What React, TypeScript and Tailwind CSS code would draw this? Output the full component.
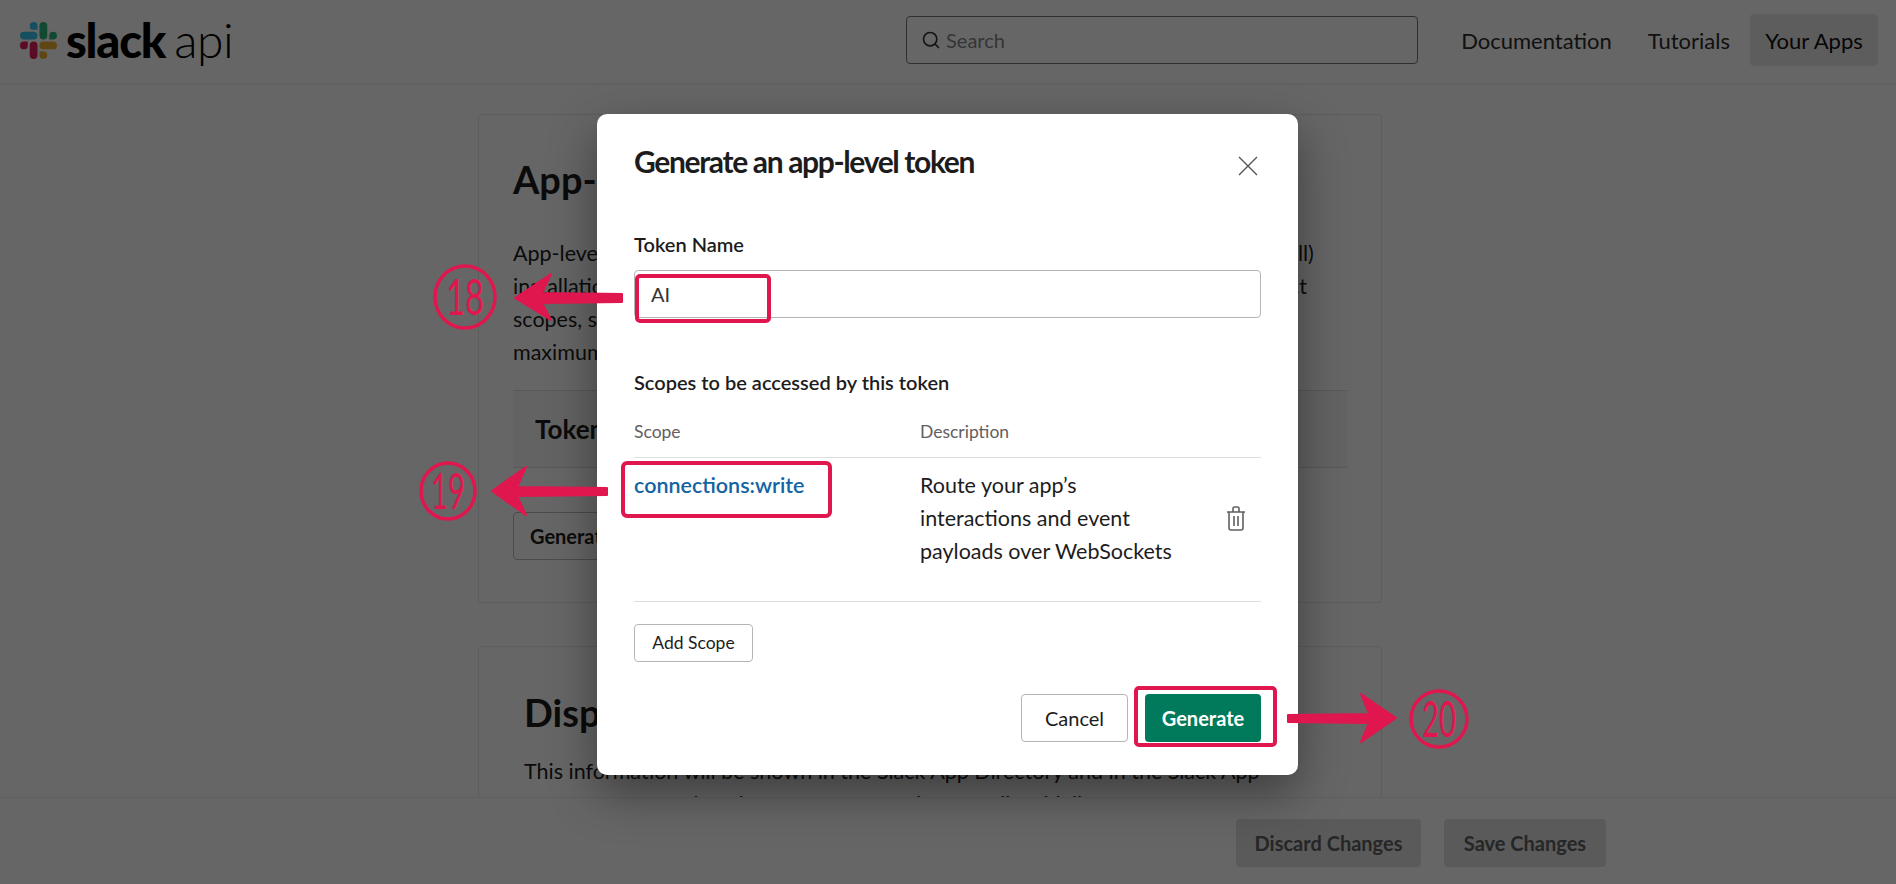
import { Search } from 'lucide-react'

const slackParts = [
  { color: '#E01E5A', d: 'M5.042 15.165a2.528 2.528 0 0 1-2.52 2.523A2.528 2.528 0 0 1 0 15.165a2.527 2.527 0 0 1 2.522-2.52h2.52v2.52zM6.313 15.165a2.527 2.527 0 0 1 2.521-2.52 2.527 2.527 0 0 1 2.521 2.52v6.313A2.528 2.528 0 0 1 8.834 24a2.528 2.528 0 0 1-2.521-2.522v-6.313z' },
  { color: '#36C5F0', d: 'M8.834 5.042a2.528 2.528 0 0 1-2.521-2.52A2.528 2.528 0 0 1 8.834 0a2.528 2.528 0 0 1 2.521 2.522v2.52H8.834zM8.834 6.313a2.528 2.528 0 0 1 2.521 2.521 2.528 2.528 0 0 1-2.521 2.521H2.522A2.528 2.528 0 0 1 0 8.834a2.528 2.528 0 0 1 2.522-2.521h6.312z' },
  { color: '#2EB67D', d: 'M18.956 8.834a2.528 2.528 0 0 1 2.522-2.521A2.528 2.528 0 0 1 24 8.834a2.528 2.528 0 0 1-2.522 2.521h-2.522V8.834zM17.688 8.834a2.528 2.528 0 0 1-2.523 2.521 2.527 2.527 0 0 1-2.52-2.521V2.522A2.527 2.527 0 0 1 15.165 0a2.528 2.528 0 0 1 2.523 2.522v6.312z' },
  { color: '#ECB22E', d: 'M15.165 18.956a2.528 2.528 0 0 1 2.523 2.522A2.528 2.528 0 0 1 15.165 24a2.527 2.527 0 0 1-2.52-2.522v-2.522h2.52zM15.165 17.688a2.527 2.527 0 0 1-2.52-2.523 2.526 2.526 0 0 1 2.52-2.52h6.313A2.527 2.527 0 0 1 24 15.165a2.528 2.528 0 0 1-2.522 2.523h-6.313z' },
]

const RED = '#e0174f'

function Header() {
  return (
    <header className="flex h-[85px] shrink-0 items-center border-b-2 border-[#f2f2f2] bg-white pb-[3px] pl-[20px] pr-[18px]">
      <svg viewBox="0 0 24 24" className="h-[37px] w-[37px]">
        {slackParts.map((p) => (
          <path key={p.color} d={p.d} fill={p.color} />
        ))}
      </svg>
      <span className="ml-[9px] text-[47px] leading-none font-black tracking-[-1.2px] text-black">slack</span>
      <span className="ml-[9px] text-[48px] leading-none font-light tracking-[-0.5px] text-black">api</span>
      <div className="ml-[calc(906px-233px)] flex h-[48px] w-[512px] items-center rounded-[4px] border border-[#777777] pl-[14px]">
        <Search className="h-[20px] w-[20px] text-[#333333]" strokeWidth={2} />
        <span className="ml-[5px] text-[20px] text-[#868686]">Search</span>
      </div>
      <nav className="ml-auto flex items-center text-[22px] text-[#2c2c2c]">
        <span>Documentation</span>
        <span className="ml-[36px]">Tutorials</span>
        <span className="ml-[20px] flex h-[52px] w-[128px] items-center justify-center rounded-[4px] bg-[#e8e8e8] text-[#111111]">
          Your Apps
        </span>
      </nav>
    </header>
  )
}

function PageBehind() {
  return (
    <main className="flex-1 overflow-hidden pt-[29px]">
      <div className="ml-[478px] w-[904px]">
        <section className="h-[489px] rounded-[4px] border border-[#e8e8e8] px-[34px] pt-[40px]">
          <h2 className="text-[38px] leading-[48px] font-bold text-[#1d1c1d]">App-level Tokens</h2>
          <div className="mt-[34px] text-[21.5px] leading-[33px] whitespace-nowrap text-[#1d1c1d]">
            <div>App-level tokens allow your app to use platform features that apply to multiple (or all)</div>
            <div>installation of your app. Each token can be given its own scopes and used to connect</div>
            <div>scopes, such as connecting over WebSockets. You can generate many tokens up to</div>
            <div>maximum number allowed for your app.</div>
          </div>
          <div className="mt-[21px] flex h-[78px] items-center border-y border-[#dddddd] bg-[#f8f8f8] px-[22px] text-[26px] font-bold text-[#1d1c1d]">
            Token Name
          </div>
          <div className="mt-[44px] flex h-[48px] w-[300px] items-center rounded-[4px] border border-[#bbbbbb] px-[16px] text-[20px] font-bold text-[#1d1c1d]">
            Generate Token and Scopes
          </div>
        </section>
        <section className="mt-[43px] rounded-[4px] border border-[#e8e8e8] pl-[45px] pr-[34px] pt-[41px]">
          <h2 className="text-[38px] leading-[48px] font-bold text-[#1d1c1d]">Display Information</h2>
          <div className="mt-[19px] text-[21.5px] leading-[33px] whitespace-nowrap text-[#1d1c1d]">
            <div>This information will be shown in the Slack App Directory and in the Slack App</div>
            <div>Browser. Information about your app. Review Detail Guidelines</div>
          </div>
        </section>
      </div>
    </main>
  )
}

function Footer() {
  return (
    <footer className="flex h-[87px] shrink-0 items-center border-t border-[#eeeeee] bg-white pl-[1236px] pt-[4px]">
      <span className="flex h-[48px] w-[185px] items-center justify-center rounded-[4px] bg-[#e2e2e2] text-[20px] font-bold text-[#606060]">
        Discard Changes
      </span>
      <span className="ml-[23px] flex h-[48px] w-[162px] items-center justify-center rounded-[4px] bg-[#e2e2e2] text-[20px] font-bold text-[#606060]">
        Save Changes
      </span>
    </footer>
  )
}

function Modal() {
  return (
    <div className="absolute left-[597px] top-[114px] h-[661px] w-[701px] rounded-[10px] bg-white pl-[37px] pr-[37px] pt-[28px] text-[#1d1c1d] shadow-[0_18px_48px_rgba(0,0,0,0.4)]">
      <div className="flex h-[38px] items-center justify-between">
        <h1 className="text-[30px] leading-[38px] font-bold tracking-[-1.35px]">Generate an app-level token</h1>
        <svg viewBox="0 0 20 20" className="mr-[3px] mt-[10px] h-[20px] w-[20px] text-[#555555]" fill="none" stroke="currentColor" strokeWidth="1.4">
          <path d="M1 1l18 18M19 1L1 19" />
        </svg>
      </div>
      <div className="mt-[52px] text-[20px] leading-[24px] font-semibold">Token Name</div>
      <div className="mt-[14px] flex h-[48px] items-center rounded-[4px] border border-[#b5b5b5] px-[16px] text-[20px] text-[#333333]">AI</div>
      <div className="mt-[52px] text-[20px] leading-[24px] font-semibold">Scopes to be accessed by this token</div>
      <div className="mt-[28px] flex h-[36px] border-b border-[#dddddd] text-[17.5px] leading-[20px] text-[#616061]">
        <span className="w-[286px]">Scope</span>
        <span>Description</span>
      </div>
      <div className="flex h-[144px] border-b border-[#dddddd] pt-[11px] text-[21.5px] leading-[33px]">
        <a className="w-[286px] font-semibold text-[#1264a3]">connections:write</a>
        <div className="w-[270px]">
          <div>Route your app’s</div>
          <div>interactions and event</div>
          <div>payloads over WebSockets</div>
        </div>
        <svg viewBox="0 0 20 25" className="ml-[36px] mt-[37px] h-[25px] w-[20px] text-[#616061]" fill="none" stroke="currentColor" strokeWidth="1.6">
          <path d="M1 6h18M7 6V2.5A1.5 1.5 0 0 1 8.500 1h3A1.500 1.500 0 0 1 13 2.500V6M3 6v16a2 2 0 0 0 2 2h10a2 2 0 0 0 2-2V6M8 10v10M12 10v10" />
        </svg>
      </div>
      <div className="mt-[22px] flex h-[38px] w-[119px] items-center justify-center rounded-[4px] border border-[#b5b5b5] text-[17.5px]">
        Add Scope
      </div>
      <div className="mt-[32px] flex justify-end gap-[17px]">
        <div className="flex h-[48px] w-[107px] items-center justify-center rounded-[4px] border border-[#b5b5b5] text-[20px]">
          Cancel
        </div>
        <div className="flex h-[48px] w-[116px] items-center justify-center rounded-[4px] bg-[#007a5a] text-[20px] font-bold text-white">
          Generate
        </div>
      </div>
    </div>
  )
}

function Num({ label, cx, cy, rx, ry, len }: { label: string; cx: number; cy: number; rx: number; ry: number; len: number }) {
  return (
    <g>
      <ellipse cx={cx} cy={cy} rx={rx} ry={ry} fill="none" stroke={RED} strokeWidth="3.5" />
      <text
        x={cx}
        y={cy + 18}
        textAnchor="middle"
        textLength={len}
        lengthAdjust="spacingAndGlyphs"
        fontSize="50"
        fontWeight="400"
        fill={RED}
        fontFamily="Lato, sans-serif"
      >
        {label}
      </text>
    </g>
  )
}

function Annotations() {
  return (
    <>
      <div className="absolute left-[635px] top-[274px] h-[49px] w-[136px] rounded-[5px] border-[4px] border-[#e0174f]" />
      <div className="absolute left-[621px] top-[461px] h-[57px] w-[211px] rounded-[6px] border-[4px] border-[#e0174f]" />
      <div className="absolute left-[1134px] top-[686px] h-[61px] w-[143px] rounded-[5px] border-[4px] border-[#e0174f]" />
      <svg viewBox="0 0 1896 884" className="absolute inset-0 h-[884px] w-[1896px]">
        <Num label="18" cx={465} cy={297} rx={30} ry={31} len={38} />
        <Num label="19" cx={448} cy={491} rx={27} ry={28} len={34} />
        <Num label="20" cx={1439} cy={719} rx={28} ry={28} len={34} />
        <g fill={RED} stroke={RED} strokeLinejoin="round" strokeLinecap="round">
          <path d="M515 298l36-24-9 19 80 1v8l-80 1 9 17z" strokeWidth="2" />
          <path d="M492 491l34-24-9 20 90 1v7l-90 1 9 19z" strokeWidth="2" />
          <path d="M1396 718l-35-24 8 20-81 1v7l81 1-8 19z" strokeWidth="2" />
        </g>
      </svg>
    </>
  )
}

export default function App() {
  return (
    <div className="relative flex h-[884px] w-full flex-col overflow-hidden bg-white font-['Lato',sans-serif]">
      <Header />
      <PageBehind />
      <Footer />
      <div className="absolute inset-0 bg-black/60" />
      <Modal />
      <Annotations />
    </div>
  )
}
